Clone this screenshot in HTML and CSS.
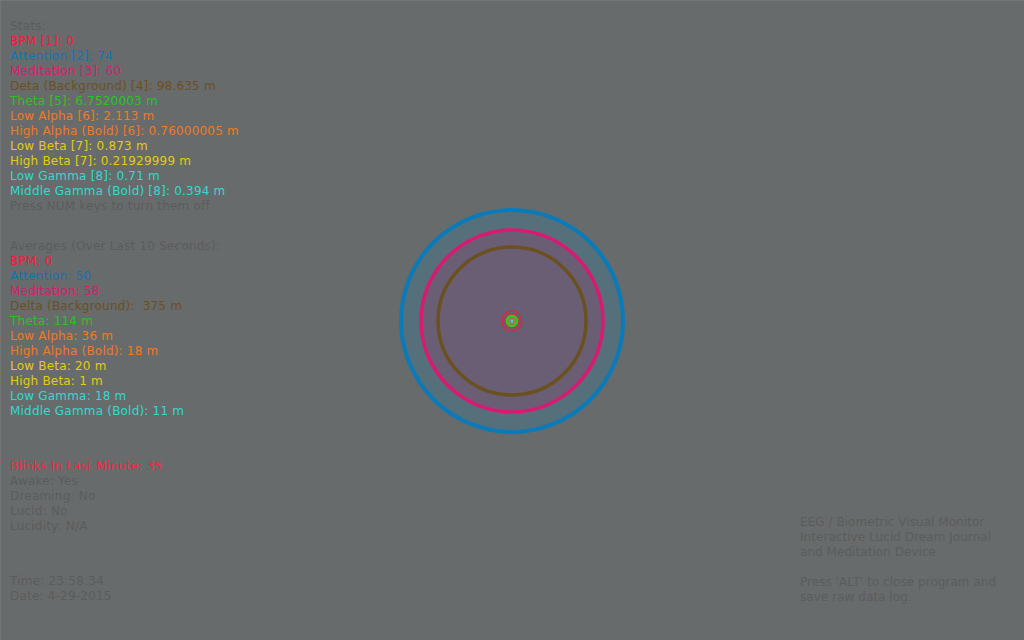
FILE: index.html
```html
<!DOCTYPE HTML>
<html>
	<head>
		<title>EEG / Biometric Visual Monitor</title>
		<link rel="stylesheet" href="styles.css">
	</head>
	<body>
		<div class="screen">
			<div class="readout">
				<div class="group">
					<div class="muted">Stats:</div>
					<div class="bpm">BPM [1]: 0</div>
					<div class="attention">Attention [2]: 74</div>
					<div class="meditation">Meditation [3]: 60</div>
					<div class="delta">Deta (Background) [4]: 98.635 m</div>
					<div class="theta">Theta [5]: 6.7520003 m</div>
					<div class="alpha">Low Alpha [6]: 2.113 m</div>
					<div class="alpha">High Alpha (Bold) [6]: 0.76000005 m</div>
					<div class="beta">Low Beta [7]: 0.873 m</div>
					<div class="beta">High Beta [7]: 0.21929999 m</div>
					<div class="gamma">Low Gamma [8]: 0.71 m</div>
					<div class="gamma">Middle Gamma (Bold) [8]: 0.394 m</div>
					<div class="muted">Press NUM keys to turn them off</div>
				</div>
				<div class="group averages">
					<div class="muted">Averages (Over Last 10 Seconds):</div>
					<div class="bpm">BPM: 0</div>
					<div class="attention">Attention: 50</div>
					<div class="meditation">Meditation: 58</div>
					<div class="delta">Delta (Background):&nbsp; 375 m</div>
					<div class="theta">Theta: 114 m</div>
					<div class="alpha">Low Alpha: 36 m</div>
					<div class="alpha">High Alpha (Bold): 18 m</div>
					<div class="beta">Low Beta: 20 m</div>
					<div class="beta">High Beta: 1 m</div>
					<div class="gamma">Low Gamma: 18 m</div>
					<div class="gamma">Middle Gamma (Bold): 11 m</div>
				</div>
				<div class="group state">
					<div class="blinks">Blinks In Last Minute: 35</div>
					<div class="muted">Awake: Yes</div>
					<div class="muted">Dreaming: No</div>
					<div class="muted">Lucid: No</div>
					<div class="muted">Lucidity: N/A</div>
				</div>
				<div class="group clock">
					<div class="muted">Time: 23:58:34</div>
					<div class="muted">Date: 4-29-2015</div>
				</div>
			</div>

			<div class="visual">
				<svg width="232" height="232" viewBox="-116 -116 232 232">
					<circle r="111" fill="#55707a" stroke="#0a7ab8" stroke-width="4"/>
					<circle r="91" fill="#6a5e74" stroke="#d81a72" stroke-width="3.5"/>
					<circle r="74" fill="none" stroke="#6b5020" stroke-width="3.5"/>
					<circle r="10" fill="none" stroke="#e8203a" stroke-width="1.2"/>
					<circle r="7" fill="none" stroke="#e8203a" stroke-width="1.2"/>
					<circle r="5" fill="none" stroke="#28d020" stroke-width="2.5"/>
					<circle r="3" fill="none" stroke="#f07820" stroke-width="1"/>
					<rect x="-1.5" y="-1.5" width="3" height="3" fill="#40d8d0"/>
				</svg>
			</div>

			<div class="about">
				<div class="muted">EEG / Biometric Visual Monitor</div>
				<div class="muted">Interactive Lucid Dream Journal</div>
				<div class="muted">and Meditation Device</div>
				<div class="muted gap">Press 'ALT' to close program and</div>
				<div class="muted">save raw data log.</div>
			</div>
		</div>
	</body>
</html>
```

FILE: styles.css
```css
html, body {
	margin: 0;
	padding: 0;
	background-color: #686b6b;
}
.screen {
	display: flex;
	width: 1024px;
	height: 640px;
	font-family: "DejaVu Sans", Verdana, sans-serif;
	font-size: 12px;
	letter-spacing: 0.2px;
	line-height: 15px;
	box-sizing: border-box;
	border-top: 1px solid #737676;
	border-left: 1px solid #737676;
}
.readout {
	flex: 0 0 400px;
	padding: 18px 0 0 9px;
	box-sizing: border-box;
}
.averages {
	margin-top: 25px;
}
.state {
	margin-top: 40px;
}
.clock {
	margin-top: 40px;
}
.visual {
	flex: 0 0 232px;
	display: flex;
	align-items: center;
	justify-content: center;
	margin-left: -5px;
}
.about {
	flex: 1;
	display: flex;
	flex-direction: column;
	justify-content: flex-end;
	padding: 0 0 35px 172px;
	white-space: nowrap;
	letter-spacing: 0.05px;
}
.gap {
	margin-top: 15px;
}

.muted { color: #5b5d5d; }
.bpm { color: #e8203a; }
.blinks { color: #ec2a44; }
.attention { color: #0a78b4; }
.meditation { color: #d81a72; }
.delta { color: #6b5020; }
.theta { color: #28c41e; }
.alpha { color: #f07a1e; }
.beta { color: #e2cc10; }
.gamma { color: #34d8d0; }
```
